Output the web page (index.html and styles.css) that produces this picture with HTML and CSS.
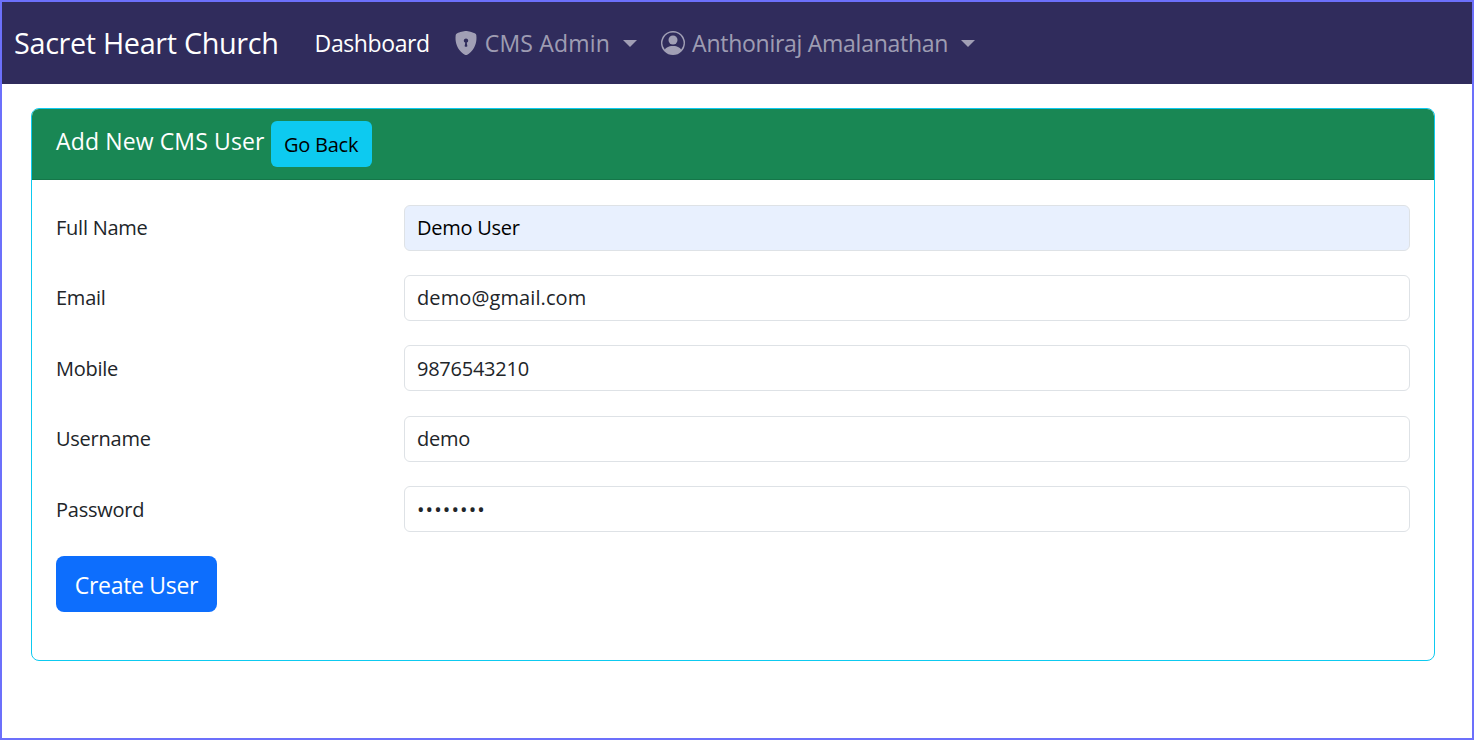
FILE: index.html
```html
<!DOCTYPE html>
<html lang="en">
<head>
<meta charset="utf-8">
<title>Add New CMS User</title>
<link rel="stylesheet" href="styles.css">
</head>
<body>
<div class="frame">
  <nav class="navbar">
    <span class="brand">Sacret Heart Church</span>
    <a class="nav-link active">Dashboard</a>
    <a class="nav-link">
      <svg class="icon" viewBox="0 0 16 16"><path fill-rule="evenodd" d="M8 0c-.69 0-1.843.265-2.928.56-1.11.3-2.229.655-2.887.87a1.54 1.54 0 0 0-1.044 1.262c-.596 4.477.787 7.795 2.465 9.99a11.777 11.777 0 0 0 2.517 2.453c.386.273.744.482 1.048.625.28.132.581.24.829.24s.548-.108.829-.24a7.159 7.159 0 0 0 1.048-.625 11.775 11.775 0 0 0 2.517-2.453c1.678-2.195 3.061-5.513 2.465-9.99a1.541 1.541 0 0 0-1.044-1.263 62.467 62.467 0 0 0-2.887-.87C9.843.266 8.69 0 8 0zm0 5a1.5 1.5 0 0 1 .5 2.915l.385 1.99a.5.5 0 0 1-.491.595h-.788a.5.5 0 0 1-.49-.595l.384-1.99A1.5 1.5 0 0 1 8 5z"/></svg>
      <span class="wide">CMS Admin</span><i class="caret"></i>
    </a>
    <a class="nav-link">
      <svg class="icon" viewBox="0 0 16 16"><path d="M11 6a3 3 0 1 1-6 0 3 3 0 0 1 6 0z"/><path fill-rule="evenodd" d="M0 8a8 8 0 1 1 16 0A8 8 0 0 1 0 8zm8-7a7 7 0 0 0-5.468 11.37C3.242 11.226 4.805 10 8 10s4.757 1.225 5.468 2.37A7 7 0 0 0 8 1z"/></svg>
      <span>Anthoniraj Amalanathan</span><i class="caret"></i>
    </a>
  </nav>
  <main class="container">
    <section class="card">
      <header class="card-header">
        <span class="card-title">Add New CMS User</span>
        <a class="btn-back">Go Back</a>
      </header>
      <form class="card-body">
        <div class="row"><label class="label">Full Name</label><input class="control autofilled" type="text" value="Demo User"></div>
        <div class="row"><label class="label">Email</label><input class="control spaced" type="text" value="demo@gmail.com"></div>
        <div class="row"><label class="label">Mobile</label><input class="control" type="text" value="9876543210"></div>
        <div class="row"><label class="label">Username</label><input class="control" type="text" value="demo"></div>
        <div class="row"><label class="label">Password</label><input class="control secret" type="password" value="12345678"></div>
        <button class="btn-submit" type="button">Create User</button>
      </form>
    </section>
  </main>
</div>
</body>
</html>
```
FILE: styles.css
```css
* { box-sizing: border-box; }
html, body { margin: 0; height: 100%; }
body {
  font-family: "Open Sans", "Noto Sans", sans-serif;
  color: #212529;
  background: #fff;
  overflow: hidden;
}
.frame {
  height: 740px;
  border: 2px solid #6c70fb;
  background: #fff;
}
.navbar {
  display: flex;
  align-items: center;
  height: 82px;
  padding-left: 12px;
  background: #302c5c;
}
.brand {
  margin-right: 36px;
  padding-bottom: 1px;
  color: #fff;
  font-size: 28.8px;
  letter-spacing: -0.33px;
  white-space: nowrap;
}
.nav-link {
  display: flex;
  align-items: center;
  margin-right: 24px;
  color: rgba(255, 255, 255, 0.55);
  font-size: 23px;
  letter-spacing: -0.27px;
  white-space: nowrap;
}
.nav-link.active { margin-right: 24px; color: #fff; letter-spacing: -0.4px; }
.wide { letter-spacing: 0.2px; }
.icon {
  width: 24px;
  height: 24px;
  margin-right: 7px;
  fill: currentColor;
}
.caret {
  width: 0;
  height: 0;
  margin-left: 13px;
  border-top: 7px solid currentColor;
  border-left: 7px solid transparent;
  border-right: 7px solid transparent;
}
.container { padding: 24px 37px 0 29px; }
.card {
  height: 553px;
  border: 1px solid #0dcaf0;
  border-radius: 8px;
  overflow: hidden;
}
.card-header {
  display: flex;
  align-items: center;
  height: 71px;
  padding-left: 24px;
  background: #198754;
  border-bottom: 1px solid rgba(0, 0, 0, 0.125);
}
.card-title {
  margin-right: 6px;
  padding-bottom: 6px;
  color: #fff;
  font-size: 23px;
  letter-spacing: 0.13px;
}
.btn-back {
  display: flex;
  align-items: center;
  justify-content: center;
  width: 101px;
  height: 46px;
  border-radius: 6px;
  background: #0dcaf0;
  color: #000;
  font-size: 20px;
  letter-spacing: -0.25px;
}
.card-body {
  display: flex;
  flex-direction: column;
  gap: 24.4px;
  padding: 24.5px 24px 24px;
}
.row {
  display: grid;
  grid-template-columns: 348px 1fr;
  align-items: center;
}
.label {
  color: #212529;
  font-size: 20px;
  letter-spacing: -0.25px;
}
.control {
  width: 100%;
  height: 46px;
  padding: 0 12px;
  border: 1px solid #dee2e6;
  border-radius: 6px;
  background: #fff;
  color: #212529;
  font: 20px "Open Sans", "Noto Sans", sans-serif;
  letter-spacing: -0.25px;
}
.spaced { letter-spacing: 0.1px; }
.secret { letter-spacing: 1.1px; }
.autofilled { background: #e8f0fe; color: #000; }
.btn-submit {
  align-self: flex-start;
  width: 161px;
  height: 56px;
  padding-top: 2px;
  border: 0;
  border-radius: 8px;
  background: #0d6efd;
  color: #fff;
  font: 23px "Open Sans", "Noto Sans", sans-serif;
  letter-spacing: -0.3px;
}
```
